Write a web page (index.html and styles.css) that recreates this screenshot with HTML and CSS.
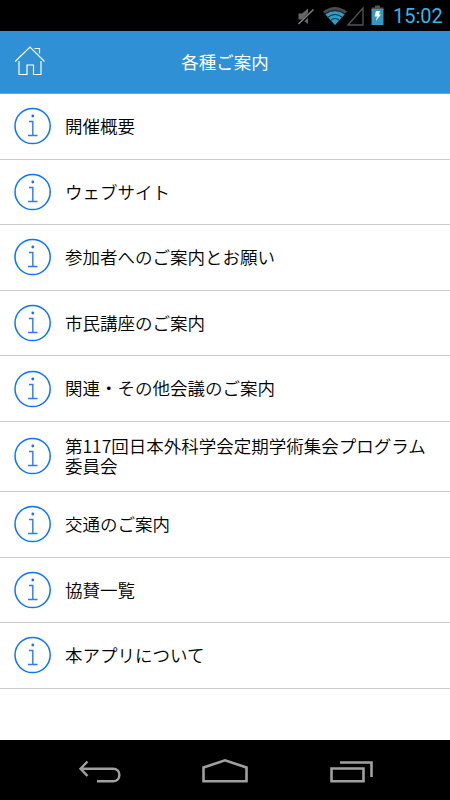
FILE: index.html
```html
<!DOCTYPE html>
<html lang="ja">
<head>
    <meta charset="UTF-8">
    <meta name="viewport" content="width=device-width, initial-scale=1.0">
    <title>各種ご案内</title>
    <link rel="stylesheet" href="styles.css">
</head>
<body>
<svg class="symbols" width="0" height="0">
    <symbol id="info" viewBox="0 0 38 38">
        <circle cx="18.6" cy="19" r="17.6" fill="none" stroke="#0a76ff" stroke-width="1.5"/>
        <circle cx="18.8" cy="9" r="1.4" fill="#1a70f5"/>
        <path d="M15 14.500H18.800V28.500M14 28.500H23.500" fill="none" stroke="#2d78ff" stroke-width="1.4"/>
    </symbol>
</svg>

<div class="status-bar">
    <svg class="status-icons" width="100" height="31" viewBox="290 0 100 31">
        <path d="M298.5 13.5H302L308 8.5V24L302 19.500H298.500Z" fill="#666"/>
        <path d="M299 25L313 10" stroke="#000" stroke-width="3"/>
        <path d="M298.500 24L313.500 9.500" stroke="#858585" stroke-width="1.400"/>
        <path d="M323 11.500Q335 2.500 347 11.500L335 25Z" fill="#4b4b4b"/>
        <path d="M325.500 14.500Q335 8 344.500 14.500L335 25Z" fill="#2e9dc6"/>
        <path d="M324.500 14Q335 6.800 345.500 14M327.500 17.500Q335 11.500 342.500 17.500M330.500 20.500Q335 16.500 339.500 20.500" fill="none" stroke="#062630" stroke-width="1"/>
        <path d="M348 25L363 8V25Z" fill="none" stroke="#555" stroke-width="1.300"/>
        <path d="M375 5.500H380V7.500H383.500V10H371.500V7.500H375Z" fill="#555"/>
        <path d="M371.500 9H383.500V25H371.500Z" fill="#3498c2"/>
        <path d="M376 11H380L379 14.500H381L376 21L377 16.500H374.500Z" fill="#fff"/>
    </svg>
    <span class="status-time">15:02</span>
</div>

<div class="header">
    <svg class="home-icon" width="32" height="32" viewBox="0 0 32 32">
        <path d="M1.200 15.500L16 1L30.500 15.500M20.500 2.500H25.500V7.500M5 15V28.500H13V19H19.500V28.500H27V15" fill="none" stroke="#fff" stroke-width="1.200"/>
    </svg>
    <h1>各種ご案内</h1>
</div>

<ul class="menu">
    <li class="menu-item">
        <svg class="info-icon"><use href="#info"/></svg>
        <span class="menu-text">開催概要</span>
    </li>
    <li class="menu-item">
        <svg class="info-icon"><use href="#info"/></svg>
        <span class="menu-text">ウェブサイト</span>
    </li>
    <li class="menu-item">
        <svg class="info-icon"><use href="#info"/></svg>
        <span class="menu-text">参加者へのご案内とお願い</span>
    </li>
    <li class="menu-item">
        <svg class="info-icon"><use href="#info"/></svg>
        <span class="menu-text">市民講座のご案内</span>
    </li>
    <li class="menu-item">
        <svg class="info-icon"><use href="#info"/></svg>
        <span class="menu-text">関連・その他会議のご案内</span>
    </li>
    <li class="menu-item menu-item-tall">
        <svg class="info-icon"><use href="#info"/></svg>
        <span class="menu-text">第117回日本外科学会定期学術集会プログラム委員会</span>
    </li>
    <li class="menu-item">
        <svg class="info-icon"><use href="#info"/></svg>
        <span class="menu-text">交通のご案内</span>
    </li>
    <li class="menu-item">
        <svg class="info-icon"><use href="#info"/></svg>
        <span class="menu-text">協賛一覧</span>
    </li>
    <li class="menu-item">
        <svg class="info-icon"><use href="#info"/></svg>
        <span class="menu-text">本アプリについて</span>
    </li>
</ul>

<div class="nav-bar">
    <svg width="44" height="26" viewBox="0 0 44 26">
        <path d="M3 10.700H35C43.500 10.700 43.500 23.300 35 23.300H19M9.500 3.500L2.500 10.700L9.500 18" fill="none" stroke="#a0a0a0" stroke-width="2.400"/>
    </svg>
    <svg width="48" height="26" viewBox="0 0 48 26">
        <path d="M2.500 9.500L24 2.300L45.500 9.500V23.300H2.500Z" fill="none" stroke="#a0a0a0" stroke-width="2.600"/>
    </svg>
    <svg width="46" height="26" viewBox="0 0 46 26">
        <path d="M3.500 10.500H35.500V23.300H3.500ZM12 4.500H43.500V19" fill="none" stroke="#a0a0a0" stroke-width="2.600"/>
    </svg>
</div>
</body>
</html>
```

FILE: styles.css
```css
* {
    margin: 0;
    padding: 0;
    box-sizing: border-box;
}

body {
    display: flex;
    flex-direction: column;
    height: 100vh;
    background-color: #fff;
    color: #000;
    font-family: 'Noto Sans CJK JP', sans-serif;
    font-size: 17.5px;
    overflow: hidden;
}

.symbols {
    display: none;
}

.status-bar {
    display: flex;
    align-items: center;
    justify-content: flex-end;
    height: 31px;
    padding-right: 7px;
    background-color: #000;
}

.status-time {
    width: 50px;
    margin-left: 3px;
    padding-top: 2px;
    font-family: Roboto, sans-serif;
    font-size: 20px;
    line-height: 29px;
    color: #33b5e5;
    white-space: nowrap;
}

.header {
    display: grid;
    grid-template-columns: 46px 1fr 46px;
    align-items: center;
    height: 63px;
    background-color: #3090d5;
    border-bottom: 1px solid #62abe0;
}

.home-icon {
    margin-left: 14px;
}

.header h1 {
    font-size: 17.5px;
    font-weight: 400;
    line-height: 24px;
    color: #fff;
    text-align: center;
}

.menu {
    flex: 1;
    list-style: none;
}

.menu-item {
    display: flex;
    align-items: center;
    height: 65.6px;
    padding: 0 14px;
    border-bottom: 1px solid #ccc;
}

.menu-item-tall {
    height: 70px;
}

.info-icon {
    width: 38px;
    height: 38px;
    flex-shrink: 0;
}

.menu-text {
    margin-left: 13px;
    font-weight: 350;
    line-height: 20.5px;
}

.nav-bar {
    display: flex;
    justify-content: space-between;
    height: 60px;
    padding: 18px 76px 0 78px;
    background-color: #000;
}
```
